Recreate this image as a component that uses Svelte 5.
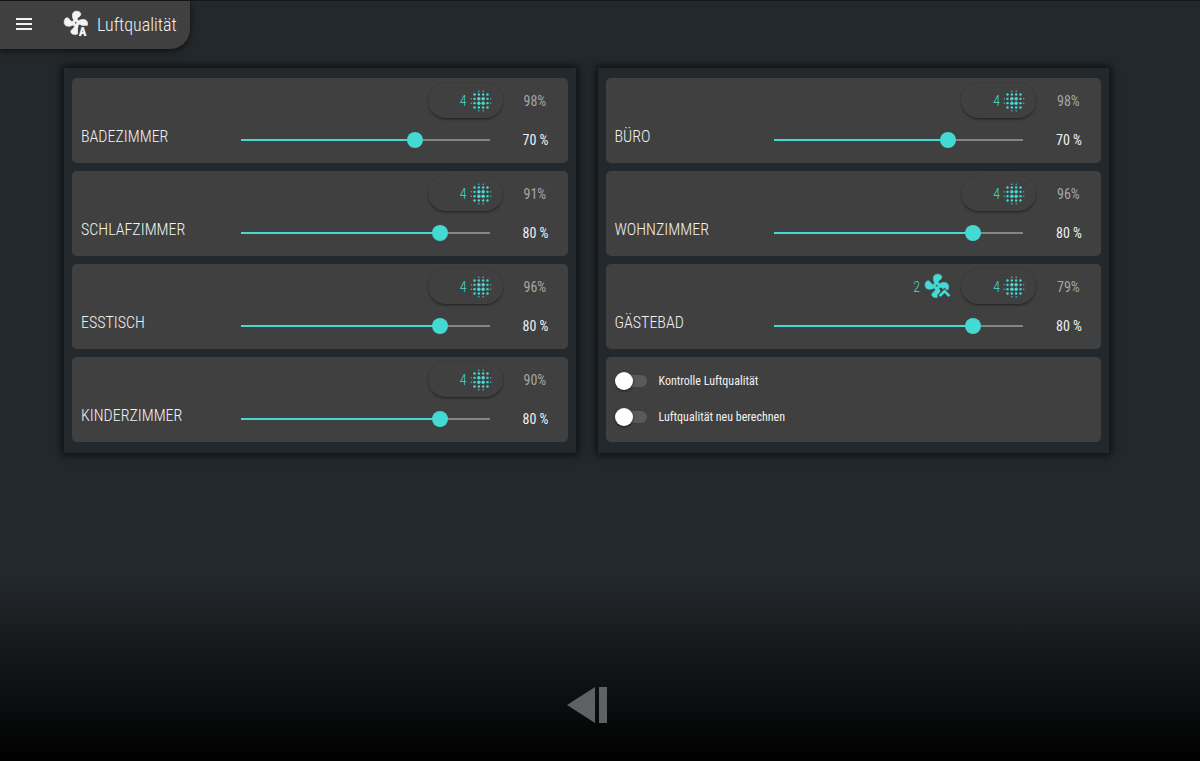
<script>
  let rooms = $state([
    { name: "Badezimmer", quality: 98, target: 70, level: 4 },
    { name: "Schlafzimmer", quality: 91, target: 80, level: 4 },
    { name: "Esstisch", quality: 96, target: 80, level: 4 },
    { name: "Kinderzimmer", quality: 90, target: 80, level: 4 },
    { name: "Büro", quality: 98, target: 70, level: 4 },
    { name: "Wohnzimmer", quality: 96, target: 80, level: 4 },
    { name: "Gästebad", quality: 79, target: 80, level: 4, fan: 2 },
  ])

  let switches = $state([
    { label: "Kontrolle Luftqualität", on: false },
    { label: "Luftqualität neu berechnen", on: false },
  ])

  const leftRooms = $derived(rooms.slice(0, 4))
  const rightRooms = $derived(rooms.slice(4))

  const fanPath = "M12,11A1,1 0 0,0 11,12A1,1 0 0,0 12,13A1,1 0 0,0 13,12A1,1 0 0,0 12,11M12.5,2C17,2 17.11,5.57 14.75,6.75C13.76,7.24 13.32,8.29 13.13,9.22C13.61,9.42 14.03,9.73 14.35,10.13C18.05,8.13 22.03,8.92 22.03,12.5C22.03,17 18.46,17.1 17.28,14.73C16.78,13.74 15.72,13.3 14.79,13.11C14.59,13.59 14.28,14 13.88,14.34C15.87,18.03 15.08,22 11.5,22C7,22 6.91,18.42 9.27,17.24C10.25,16.75 10.69,15.71 10.89,14.79C10.4,14.59 9.97,14.27 9.65,13.87C5.96,15.85 2,15.07 2,11.5C2,7 5.56,6.89 6.74,9.26C7.24,10.25 8.29,10.68 9.22,10.87C9.41,10.39 9.73,9.97 10.14,9.65C8.15,5.96 8.94,2 12.5,2Z"

  // dot grid, biggest in the middle
  const dots = []
  for (const x of [3, 6, 10, 14, 18, 21]) {
    for (const y of [3, 6, 10, 14, 18, 21]) {
      const outerX = x === 3 || x === 21
      const outerY = y === 3 || y === 21
      const innerX = x === 10 || x === 14
      const innerY = y === 10 || y === 14
      if ((outerX && !innerY) || (outerY && !innerX))
        continue
      const r = outerX || outerY ? 0.6 : innerX && innerY ? 1.6 : 1.1
      dots.push({ x, y, r })
    }
  }
</script>

{#snippet roomCard(room, id)}
  <section class="card">
    <div class="status">
      {#if room.fan}
        <span class="fan">
          {room.fan}
          <svg width="28" height="28" viewBox="0 0 24 24" aria-hidden="true">
            <mask id="chevron-cut">
              <rect width="24" height="24" fill="#fff" />
              <path d="M11.600 24v-5.400l6-6 7 7V24z" fill="#000" />
            </mask>
            <g mask="url(#chevron-cut)">
              <path class="blades" d={fanPath} transform="translate(-1 -1)" />
            </g>
            <path d="M17.600 14l5 5-1.600 1.600-3.400-3.400-3.400 3.400L12.600 19z" />
          </svg>
        </span>
      {/if}
      <button class="level" type="button">
        {room.level}
        <svg width="26" height="26" viewBox="0 0 24 24" aria-hidden="true">
          {#each dots as dot}
            <circle cx={dot.x} cy={dot.y} r={dot.r} />
          {/each}
        </svg>
      </button>
      <span class="quality">{room.quality}%</span>
    </div>
    <div class="control">
      <label for={id}>{room.name}</label>
      <div class="slider">
        <input {id} type="range" min="0" max="100" bind:value={room.target} style="--value: {room.target}%" />
      </div>
      <output for={id}>{room.target} %</output>
    </div>
  </section>
{/snippet}

<div class="page">
  <header>
    <button class="menu" type="button" aria-label="Menü">
      <svg width="24" height="24" viewBox="0 0 24 24">
        <path d="M4 6h16v2H4zM4 11h16v2H4zM4 16h16v2H4z" />
      </svg>
    </button>
    <svg class="logo" width="28" height="28" viewBox="0 0 24 24" aria-hidden="true">
      <mask id="auto-cut">
        <rect width="24" height="24" fill="#fff" />
        <rect x="12.800" y="13.400" width="12" height="11" rx="2" fill="#000" />
      </mask>
      <g mask="url(#auto-cut)">
        <path class="blades" d={fanPath} transform="translate(-1 -1)" />
      </g>
      <text x="16.800" y="22.200" text-anchor="middle">A</text>
    </svg>
    <h1>Luftqualität</h1>
  </header>

  <main>
    <div class="panel">
      {#each leftRooms as room, i}
        {@render roomCard(room, `left-${i}`)}
      {/each}
    </div>
    <div class="panel">
      {#each rightRooms as room, i}
        {@render roomCard(room, `right-${i}`)}
      {/each}
      <section class="card switches">
        {#each switches as item}
          <label>
            <input type="checkbox" role="switch" bind:checked={item.on} />
            {item.label}
          </label>
        {/each}
      </section>
    </div>
  </main>

  <footer>
    <button type="button" aria-label="Zurück">
      <svg width="40" height="36" viewBox="0 0 40 36">
        <path d="M0 18L28 0v36zM32 0h8v36h-8z" />
      </svg>
    </button>
  </footer>
</div>

<style>
  :global(body) {
    margin: 0;
    background: #000;
  }

  .page {
    --accent: #44d9d3;
    --card: #404040;
    box-sizing: border-box;
    min-height: 100vh;
    display: flex;
    flex-direction: column;
    background: linear-gradient(#23282c 0, #23282c 76%, #000 100%);
    border-top: 1px solid #15181a;
    color: #f2f2f2;
    font-family: "Roboto Condensed", "Liberation Sans Narrow", Roboto, sans-serif;
    font-weight: 400;
    font-size: 14px;
  }

  button {
    border: 0;
    padding: 0;
    background: none;
    color: inherit;
    font: inherit;
    cursor: pointer;
  }

  svg {
    display: block;
    fill: currentColor;
  }

  .blades {
    stroke: currentColor;
    stroke-width: 0.6;
  }

  header {
    align-self: flex-start;
    box-sizing: border-box;
    height: 48px;
    padding: 0 13px 2px 12px;
    display: flex;
    align-items: center;
    background: var(--card);
    border-bottom-right-radius: 20px;
    box-shadow: 0 2px 6px #0009;
  }

  .logo {
    margin: 0 6px 0 27px;

    text {
      font-family: "Roboto Condensed", Roboto, sans-serif;
      font-size: 11px;
      font-weight: 900;
    }
  }

  h1 {
    margin: 0;
    font-size: 18px;
    font-weight: 300;
  }

  main {
    display: grid;
    grid-template-columns: repeat(2, minmax(0, 1fr));
    gap: 22px;
    padding: 19px 91px 0 64px;
  }

  .panel {
    display: flex;
    flex-direction: column;
    gap: 8px;
    padding: 10px 8px 11px;
    background: #22282c;
    box-shadow: 0 0 8px 2px #000a;
  }

  .card {
    box-sizing: border-box;
    height: 85px;
    padding-top: 5px;
    background: var(--card);
    border-radius: 5px;
  }

  .status {
    display: flex;
    justify-content: flex-end;
    align-items: center;
    height: 35px;
  }

  .fan {
    display: flex;
    align-items: center;
    gap: 4px;
    margin-right: 9px;
    color: var(--accent);
    font-weight: 300;
  }

  .level {
    box-sizing: border-box;
    width: 75px;
    height: 35px;
    padding-right: 9px;
    display: flex;
    justify-content: flex-end;
    align-items: center;
    gap: 1px;
    border-radius: 18px;
    color: var(--accent);
    font-weight: 300;
    box-shadow: 0 2px 3px -1px #0007, 0 0 2px #0003;
  }

  .quality {
    box-sizing: border-box;
    width: 65px;
    padding-left: 21px;
    color: #a6a6a6;
  }

  .control {
    display: grid;
    grid-template-columns: 160fr 249fr 78px;
    align-items: center;
    height: 44px;
    padding-left: 9px;

    label {
      padding-bottom: 8px;
      font-size: 16px;
      font-weight: 300;
      text-transform: uppercase;
    }

    output {
      padding-left: 33px;
    }
  }

  .slider {
    /* lets the thumb centre reach both track ends */
    margin: 0 -8px;

    input {
      appearance: none;
      display: block;
      width: 100%;
      height: 16px;
      margin: 0;
      background: linear-gradient(to right, var(--accent) var(--value), #858585 var(--value)) center / calc(100% - 16px) 2px no-repeat;
      cursor: pointer;

      &::-webkit-slider-thumb {
        appearance: none;
        width: 16px;
        height: 16px;
        border-radius: 50%;
        background: var(--accent);
      }
    }
  }

  .switches {
    display: flex;
    flex-direction: column;
    gap: 18px;
    padding: 15px 9px;

    label {
      display: flex;
      align-items: center;
      gap: 12px;
      height: 18px;
      font-size: 12px;
    }

    input {
      appearance: none;
      display: flex;
      align-items: center;
      width: 32px;
      height: 12px;
      margin: 0;
      background: #5c5858;
      border-radius: 6px;
      cursor: pointer;

      &::before {
        content: "";
        flex: none;
        width: 18px;
        height: 18px;
        border-radius: 50%;
        background: #fff;
        box-shadow: 0 1px 3px #0008;
      }

      &:checked::before {
        margin-left: auto;
        background: var(--accent);
      }
    }
  }

  footer {
    margin-top: auto;
    padding: 0 91px 38px 64px;
    display: flex;
    justify-content: center;

    button {
      color: #5f6162;
    }
  }
</style>
